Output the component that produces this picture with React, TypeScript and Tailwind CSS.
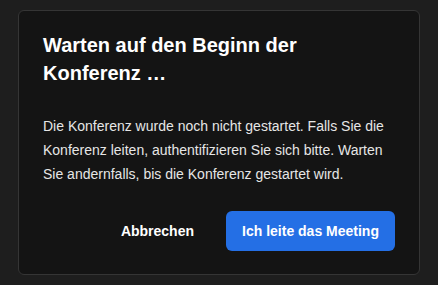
export default function App() {
  return (
    <div
      className="w-[438px] h-[285px] bg-[#1e1e1e] pt-[10px] pl-[18px]"
      style={{ fontFamily: '"Liberation Sans", Arial, sans-serif' }}
    >
      <div className="w-[402px] h-[265px] bg-[#141414] border border-[#353535] rounded-[6px] px-6 pt-5 pb-[23px] flex flex-col">
        <h1 className="text-[20px] leading-[28px] font-bold text-white">
          Warten auf den Beginn der Konferenz …
        </h1>
        <p className="mt-[27px] text-[14px] leading-[24px] text-[#e6e6e6]">
          Die Konferenz wurde noch nicht gestartet. Falls Sie die Konferenz leiten, authentifizieren Sie sich bitte. Warten
          Sie andernfalls, bis die Konferenz gestartet wird.
        </p>
        <div className="mt-auto flex justify-end gap-4">
          <button className="h-10 px-4 rounded-[6px] text-[14px] font-bold text-white">Abbrechen</button>
          <button className="h-10 w-[169px] rounded-[6px] bg-[#246fe5] text-[14px] font-bold text-white">
            Ich leite das Meeting
          </button>
        </div>
      </div>
    </div>
  );
}
